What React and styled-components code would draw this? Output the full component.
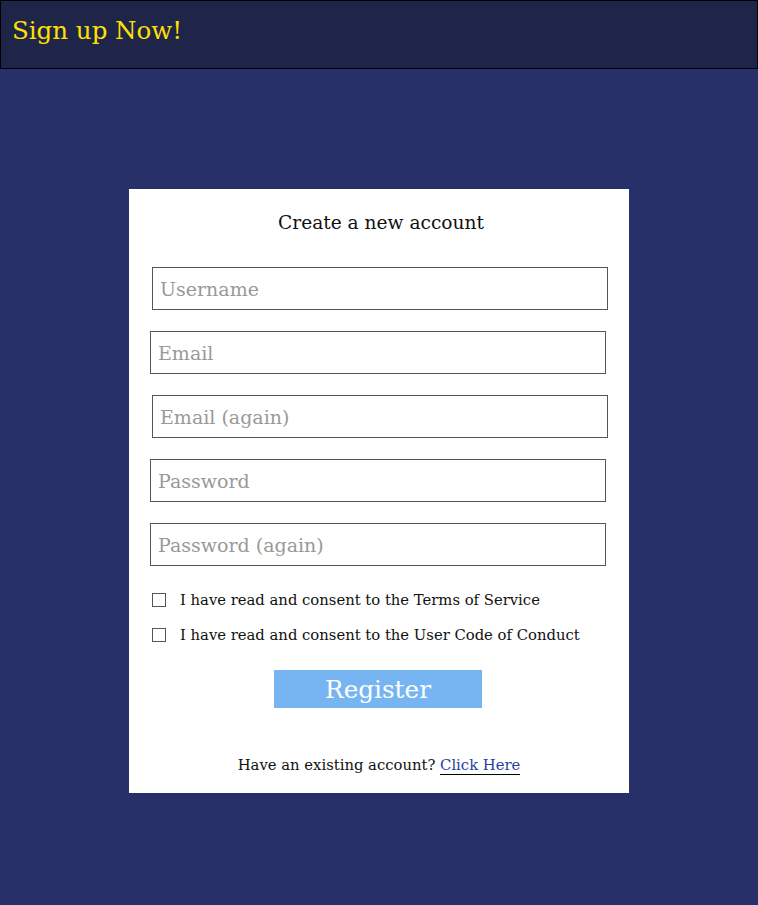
import React from "react";
import styled, { createGlobalStyle } from "styled-components";

const GlobalStyle = createGlobalStyle`
  html, body {
    margin: 0;
    padding: 0;
    background: #28306a;
    font-family: "DejaVu Serif", "Liberation Serif", serif;
  }
`;

const fields = [
  { placeholder: "Username", type: "text", shift: 2 },
  { placeholder: "Email", type: "email", shift: 0 },
  { placeholder: "Email (again)", type: "email", shift: 2 },
  { placeholder: "Password", type: "password", shift: 0 },
  { placeholder: "Password (again)", type: "password", shift: 0 },
];

const consents = [
  "I have read and consent to the Terms of Service",
  "I have read and consent to the User Code of Conduct",
];

export default function App() {
  return (
    <Page>
      <GlobalStyle />
      <Header>
        <Brand>Sign up Now!</Brand>
      </Header>
      <Main>
        <Card>
          <Title>Create a new account</Title>
          <Fields>
            {fields.map((f) => (
              <Input
                key={f.placeholder}
                type={f.type}
                placeholder={f.placeholder}
                $shift={f.shift}
              />
            ))}
          </Fields>
          <Consents>
            {consents.map((c) => (
              <Consent key={c}>
                <Box type="checkbox" />
                <span>{c}</span>
              </Consent>
            ))}
          </Consents>
          <Register>Register</Register>
          <Footer>
            Have an existing account? <LoginLink href="#">Click Here</LoginLink>
          </Footer>
        </Card>
      </Main>
    </Page>
  );
}

const Page = styled.div`
  min-height: 905px;
  display: flex;
  flex-direction: column;
`;

const Header = styled.header`
  height: 67px;
  background: #1f2549;
  border: 1px solid #000;
  display: flex;
  align-items: center;
  padding-left: 11px;
`;

const Brand = styled.h1`
  margin: 0 0 8px 0;
  color: #ffe100;
  font-size: 24.5px;
  font-weight: normal;
`;

const Main = styled.main`
  display: flex;
  justify-content: center;
  padding: 120px 0 0 0;
`;

const Card = styled.div`
  width: 500px;
  height: 604px;
  box-sizing: border-box;
  background: #fff;
  display: flex;
  flex-direction: column;
  padding: 21px 0 0 21px;
`;

const Title = styled.h2`
  margin: 0;
  padding-right: 17px;
  text-align: center;
  font-size: 18.6px;
  font-weight: normal;
  line-height: 26px;
  color: #111;
`;

const Fields = styled.div`
  display: flex;
  flex-direction: column;
  gap: 21px;
  margin-top: 31px;
`;

const Input = styled.input`
  box-sizing: border-box;
  width: 456px;
  height: 43px;
  margin-left: ${(p) => p.$shift}px;
  border: 1px solid #555;
  padding: 0 7px;
  font-family: inherit;
  font-size: 19px;
  color: #222;
  outline: none;

  &::placeholder {
    color: #999;
  }
`;

const Consents = styled.div`
  display: flex;
  flex-direction: column;
  gap: 15px;
  margin-top: 24px;
  margin-left: 2px;
`;

const Consent = styled.label`
  display: flex;
  align-items: center;
  gap: 14px;
  font-size: 14.8px;
  line-height: 20px;
  color: #111;
`;

const Box = styled.input`
  appearance: none;
  margin: 0;
  width: 14px;
  height: 14px;
  border: 1px solid #555;
  background: #fff;
`;

const Register = styled.button`
  align-self: center;
  margin: 25px 23px 0 0;
  width: 208px;
  height: 38px;
  border: none;
  background: #76b5f1;
  color: #fff;
  font-family: inherit;
  font-size: 24.7px;
  cursor: pointer;
`;

const Footer = styled.p`
  margin: 48px 21px 0 0;
  text-align: center;
  font-size: 14.8px;
  color: #111;
`;

const LoginLink = styled.a`
  color: #2a40a0;
  text-decoration: none;
  border-bottom: 1px solid #000;
  padding-bottom: 1px;
`;
